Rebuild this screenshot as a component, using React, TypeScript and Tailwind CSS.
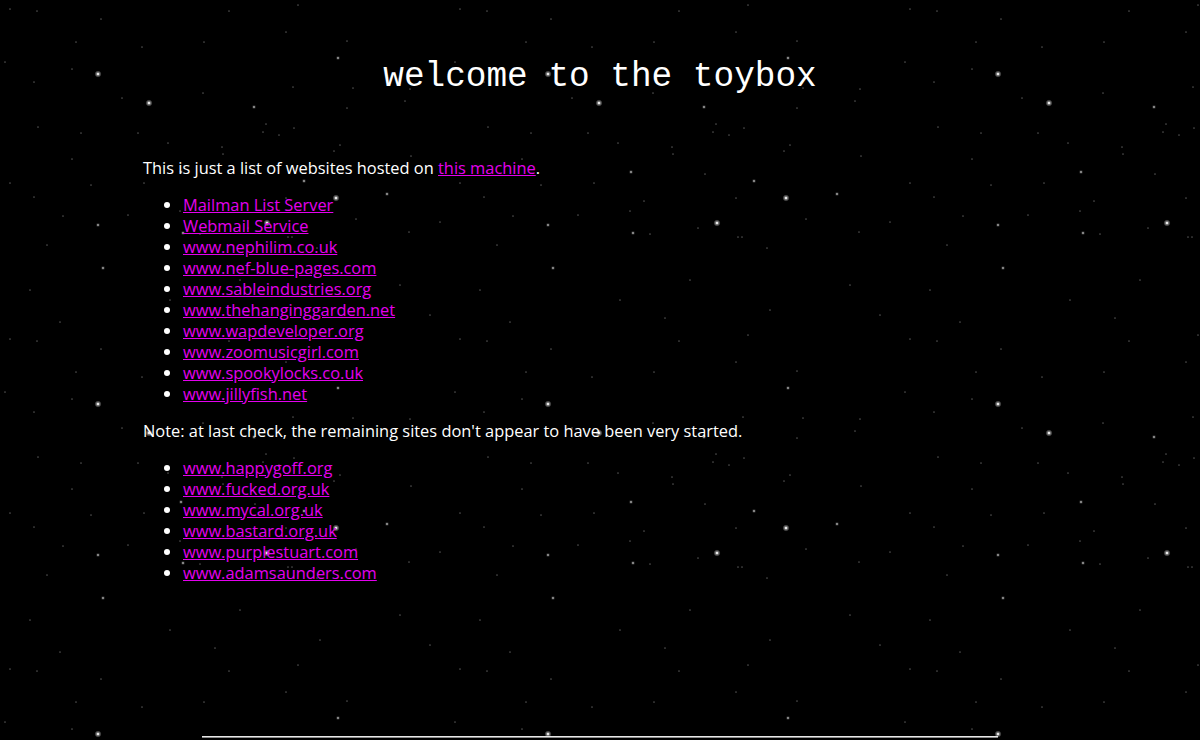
import React from "react";

type Star = [number, number, number];

const STARS: Star[] = [
  [10, 9, 0], [37, 11, 0], [101, 19, 0], [76, 42, 0], [142, 47, 0], [204, 42, 0], [229, 11, 0],
  [286, 32, 0], [298, 5, 0], [5, 62, 0], [72, 69, 0], [98, 74, 2], [34, 82, 0], [122, 98, 0],
  [203, 93, 0], [293, 87, 0], [338, 58, 1], [347, 41, 0], [410, 89, 0], [353, 88, 0],
  [149, 103, 2], [347, 108, 0], [405, 101, 0], [294, 128, 0], [340, 145, 0], [334, 151, 0],
  [38, 127, 0], [411, 156, 0], [304, 181, 1], [336, 198, 2], [387, 194, 1], [10, 183, 0],
  [34, 197, 0], [63, 216, 0], [356, 219, 0], [440, 222, 0], [409, 232, 0], [317, 248, 0],
  [47, 245, 0], [292, 237, 0], [254, 107, 1], [266, 124, 0], [263, 132, 0], [279, 135, 0],
  [81, 133, 0], [138, 133, 0], [168, 143, 0], [222, 147, 0], [223, 154, 0], [72, 159, 0],
  [181, 172, 1], [255, 174, 0], [144, 183, 0], [91, 185, 0], [286, 198, 0], [194, 201, 0],
  [180, 211, 0], [128, 215, 0], [98, 225, 1], [267, 223, 2], [248, 228, 0], [183, 233, 1],
  [200, 234, 0], [288, 237, 0],
  [103, 268, 1], [30, 290, 0], [170, 300, 0], [240, 280, 0], [320, 310, 0], [400, 285, 0],
  [60, 322, 0], [215, 318, 0], [430, 315, 0],
];

function StarField() {
  return (
    <svg className="absolute inset-0 h-full w-full" aria-hidden="true">
      <defs>
        <radialGradient id="glowB">
          <stop offset="0%" stopColor="#ffffff" stopOpacity="0.95" />
          <stop offset="30%" stopColor="#ffffff" stopOpacity="0.6" />
          <stop offset="100%" stopColor="#ffffff" stopOpacity="0" />
        </radialGradient>
        <radialGradient id="glowM">
          <stop offset="0%" stopColor="#cccccc" stopOpacity="0.8" />
          <stop offset="100%" stopColor="#cccccc" stopOpacity="0" />
        </radialGradient>
        <pattern id="stars" x="0" y="0" width="450" height="330" patternUnits="userSpaceOnUse">
          {STARS.map(([x, y, t], i) =>
            t === 2 ? (
              <g key={i}>
                <circle cx={x} cy={y} r={3.6} fill="url(#glowB)" />
                <circle cx={x} cy={y} r={1.1} fill="#f4f4f4" />
              </g>
            ) : t === 1 ? (
              <g key={i}>
                <circle cx={x} cy={y} r={2.4} fill="url(#glowM)" opacity={0.5} />
                <circle cx={x} cy={y} r={0.9} fill="#a8a8a8" />
              </g>
            ) : (
              <circle key={i} cx={x} cy={y} r={0.85} fill="#4e4e4e" />
            )
          )}
        </pattern>
      </defs>
      <rect width="100%" height="100%" fill="url(#stars)" />
    </svg>
  );
}

const list1 = [
  "Mailman List Server",
  "Webmail Service",
  "www.nephilim.co.uk",
  "www.nef-blue-pages.com",
  "www.sableindustries.org",
  "www.thehanginggarden.net",
  "www.wapdeveloper.org",
  "www.zoomusicgirl.com",
  "www.spookylocks.co.uk",
  "www.jillyfish.net",
];

const list2 = [
  "www.happygoff.org",
  "www.fucked.org.uk",
  "www.mycal.org.uk",
  "www.bastard.org.uk",
  "www.purplestuart.com",
  "www.adamsaunders.com",
];

function LinkList({ items }: { items: string[] }) {
  return (
    <ul className="my-[16px] list-disc pl-[40px]">
      {items.map((t) => (
        <li key={t}>
          <a href="#" className="text-[#e400ee] underline decoration-[#e400ee]">
            {t}
          </a>
        </li>
      ))}
    </ul>
  );
}

export default function App() {
  return (
    <div className="relative min-h-[740px] w-full overflow-hidden bg-black">
      <StarField />
      <div className="relative flex flex-col">
        <h1 className="pt-[57px] text-center font-['Liberation_Mono',monospace] text-[34.4px] font-normal leading-[40px] text-white">
          welcome to the toybox
        </h1>
        <div className="ml-[143px] mt-[60px] font-['Open_Sans','Noto_Sans',sans-serif] text-[16.4px] leading-[21px] text-white">
          <p>
            This is just a list of websites hosted on{" "}
            <a href="#" className="text-[#e400ee] underline decoration-[#e400ee]">
              this machine
            </a>
            .
          </p>
          <LinkList items={list1} />
          <p>Note: at last check, the remaining sites don't appear to have been very started.</p>
          <LinkList items={list2} />
        </div>
        <div className="mx-auto mt-[137px] h-[2px] w-[796px] border-t border-[#e8e8e8] bg-[#8a8a8a]" />
      </div>
    </div>
  );
}
